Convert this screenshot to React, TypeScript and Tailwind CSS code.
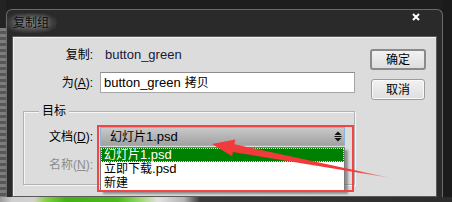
import React from "react";

function ArrowIcon() {
  return (
    <svg width="8" height="11" viewBox="0 0 8 11" className="shrink-0">
      <path d="M0.5 4 L4 0.5 L7.5 4 Z" fill="#111" />
      <rect x="0.5" y="5" width="7" height="1" fill="#111" />
      <path d="M0.5 7 L4 10.5 L7.5 7 Z" fill="#111" />
    </svg>
  );
}

export default function App() {
  return (
    <div className="relative w-[452px] h-[202px] overflow-hidden bg-[#1e1e1e] font-['Liberation_Sans','Noto_Sans_CJK_SC',sans-serif] text-[12px] leading-[14px] text-black">
      <div className="flex h-[197px]">
        {/* left backdrop strip */}
        <div className="w-[6px] flex flex-col">
          <div className="h-[28px] bg-[#232323]" />
          <div className="flex-1 bg-[repeating-linear-gradient(180deg,#7d7d7d_0px,#7d7d7d_3px,#575757_3px,#575757_6px)]" />
        </div>

        {/* dialog window */}
        <div className="mt-[9px] w-[437px] flex flex-col rounded-t-[6px] border-x border-t border-[#6a6a6a] bg-[#2a2a2a]">
          {/* title bar */}
          <div className="h-[26px] flex justify-between pl-[6px] pr-[22px]">
            <span className="self-center -ml-[8px] px-[8px] py-[3px] rounded-[10px] bg-[radial-gradient(ellipse_at_center,rgba(120,120,120,0.9)_0%,rgba(90,90,90,0.6)_50%,rgba(42,42,42,0)_80%)] text-[#0c0c0c] [text-shadow:0_0_4px_rgba(200,200,200,0.6)]">
              复制组
            </span>
            <svg width="8" height="8" viewBox="0 0 8 8" className="mt-[3px]">
              <path d="M1 1 L7 7 M7 1 L1 7" stroke="#ffffff" strokeWidth="2" />
            </svg>
          </div>

          {/* client area */}
          <div className="mx-[5px] h-[161px] flex border border-[#5a5a5a] bg-[#dcdcdc] shadow-[inset_1px_1px_0_#f2f2f2]">
            {/* form column */}
            <div className="w-[342px] flex flex-col pt-[9px]">
              <div className="h-[18px] flex items-center">
                <span className="w-[80px] text-right">复制:</span>
                <span className="ml-[12px] text-[13px] text-[#1a1838]">button_green</span>
              </div>
              <div className="mt-[8px] h-[21px] flex items-center">
                <span className="w-[80px] text-right">
                  为(<span className="underline">A</span>):
                </span>
                <div className="ml-[7px] w-[255px] h-[21px] flex items-center border border-[#a6a6a6] border-t-[#8c8c8c] bg-white pl-[3px]">
                  <span className="text-[13px]">button_green</span>
                  <span className="ml-[4px]">拷贝</span>
                </div>
              </div>

              <fieldset className="mt-[11px] ml-[10px] w-[332px] border border-[#b2b2b2] px-0 pt-[9px] pb-[10px] shadow-[inset_1px_1px_0_#f6f6f6,1px_1px_0_#f6f6f6]">
                <legend className="ml-[15px] px-[3px] bg-[#dcdcdc]">目标</legend>
                <div className="h-[19px] flex items-center">
                  <span className="w-[69px] text-right">
                    文档(<span className="underline">D</span>):
                  </span>
                  <div className="relative ml-[7px] w-[245px] h-[19px]">
                    <div className="h-full flex items-center justify-between border border-[#8eb2d8] bg-gradient-to-b from-[#c8c8c8] to-[#a2a2a2] pl-[9px] pr-[2px]">
                      <span>
                        幻灯片<span className="text-[13px]">1.psd</span>
                      </span>
                      <ArrowIcon />
                    </div>
                    {/* open list */}
                    <div className="absolute left-0 top-[20px] w-[245px] flex flex-col border border-[#7a7a7a] bg-white shadow-[3px_3px_2px_rgba(0,0,0,0.35)]">
                      <div className="h-[14px] flex items-center bg-[#008000] pl-[3px] text-white outline outline-1 outline-dotted outline-[#e8e8c0] -outline-offset-1">
                        幻灯片<span className="text-[13px]">1.psd</span>
                      </div>
                      <div className="h-[14px] flex items-center pl-[3px]">
                        立即下载<span className="text-[13px]">.psd</span>
                      </div>
                      <div className="h-[14px] flex items-center pl-[3px]">新建</div>
                    </div>
                  </div>
                </div>
                <div className="mt-[10px] h-[18px] flex items-center">
                  <span className="w-[69px] text-right text-[#8d8d8d]">
                    名称(<span className="underline">N</span>):
                  </span>
                </div>
              </fieldset>
            </div>

            {/* buttons column */}
            <div className="ml-[15px] w-[56px] pt-[12px] flex flex-col items-center gap-[9px]">
              <button className="w-[56px] h-[21px] flex items-center justify-center rounded-[3px] border-2 border-[#8a8a8a] bg-gradient-to-b from-[#f2f2f2] to-[#dedede]">
                确定
              </button>
              <button className="w-[54px] h-[21px] flex items-center justify-center rounded-[3px] border border-[#9c9c9c] bg-gradient-to-b from-[#f2f2f2] to-[#dedede] shadow-[inset_0_0_0_1px_#fafafa]">
                取消
              </button>
            </div>
          </div>
        </div>

        {/* right backdrop */}
        <div className="flex-1 bg-[#1b1b1b]" />
      </div>

      {/* bottom strip of backdrop below the dialog */}
      <div className="h-[5px] bg-[linear-gradient(90deg,#9a9a9a_0px,#cfcfcf_12px,#d2d2d2_34px,#86cf45_46px,#45b016_66px,#4cb81d_118px,#9ed46e_140px,#e2e2e2_158px,#b4b4b4_184px,#3a3a3a_200px,#2c2c2c_452px)]" />

      {/* annotation: red rectangle */}
      <div className="absolute left-[97px] top-[125px] w-[257px] h-[67px] border-2 border-[#f04646] pointer-events-none" />

      {/* annotation: red arrow */}
      <svg className="absolute inset-0 pointer-events-none" width="452" height="202" viewBox="0 0 452 202">
        <defs>
          <linearGradient id="arrowFade" x1="212" y1="144" x2="391" y2="178" gradientUnits="userSpaceOnUse">
            <stop offset="0" stopColor="#f23a3a" />
            <stop offset="0.8" stopColor="#f23a3a" />
            <stop offset="1" stopColor="#f23a3a" stopOpacity="0.3" />
          </linearGradient>
        </defs>
        <polygon
          points="212,144 235.3,139.5 234.4,144.3 391,178 232.9,151.9 232.1,156.2"
          fill="url(#arrowFade)"
        />
      </svg>
    </div>
  );
}
